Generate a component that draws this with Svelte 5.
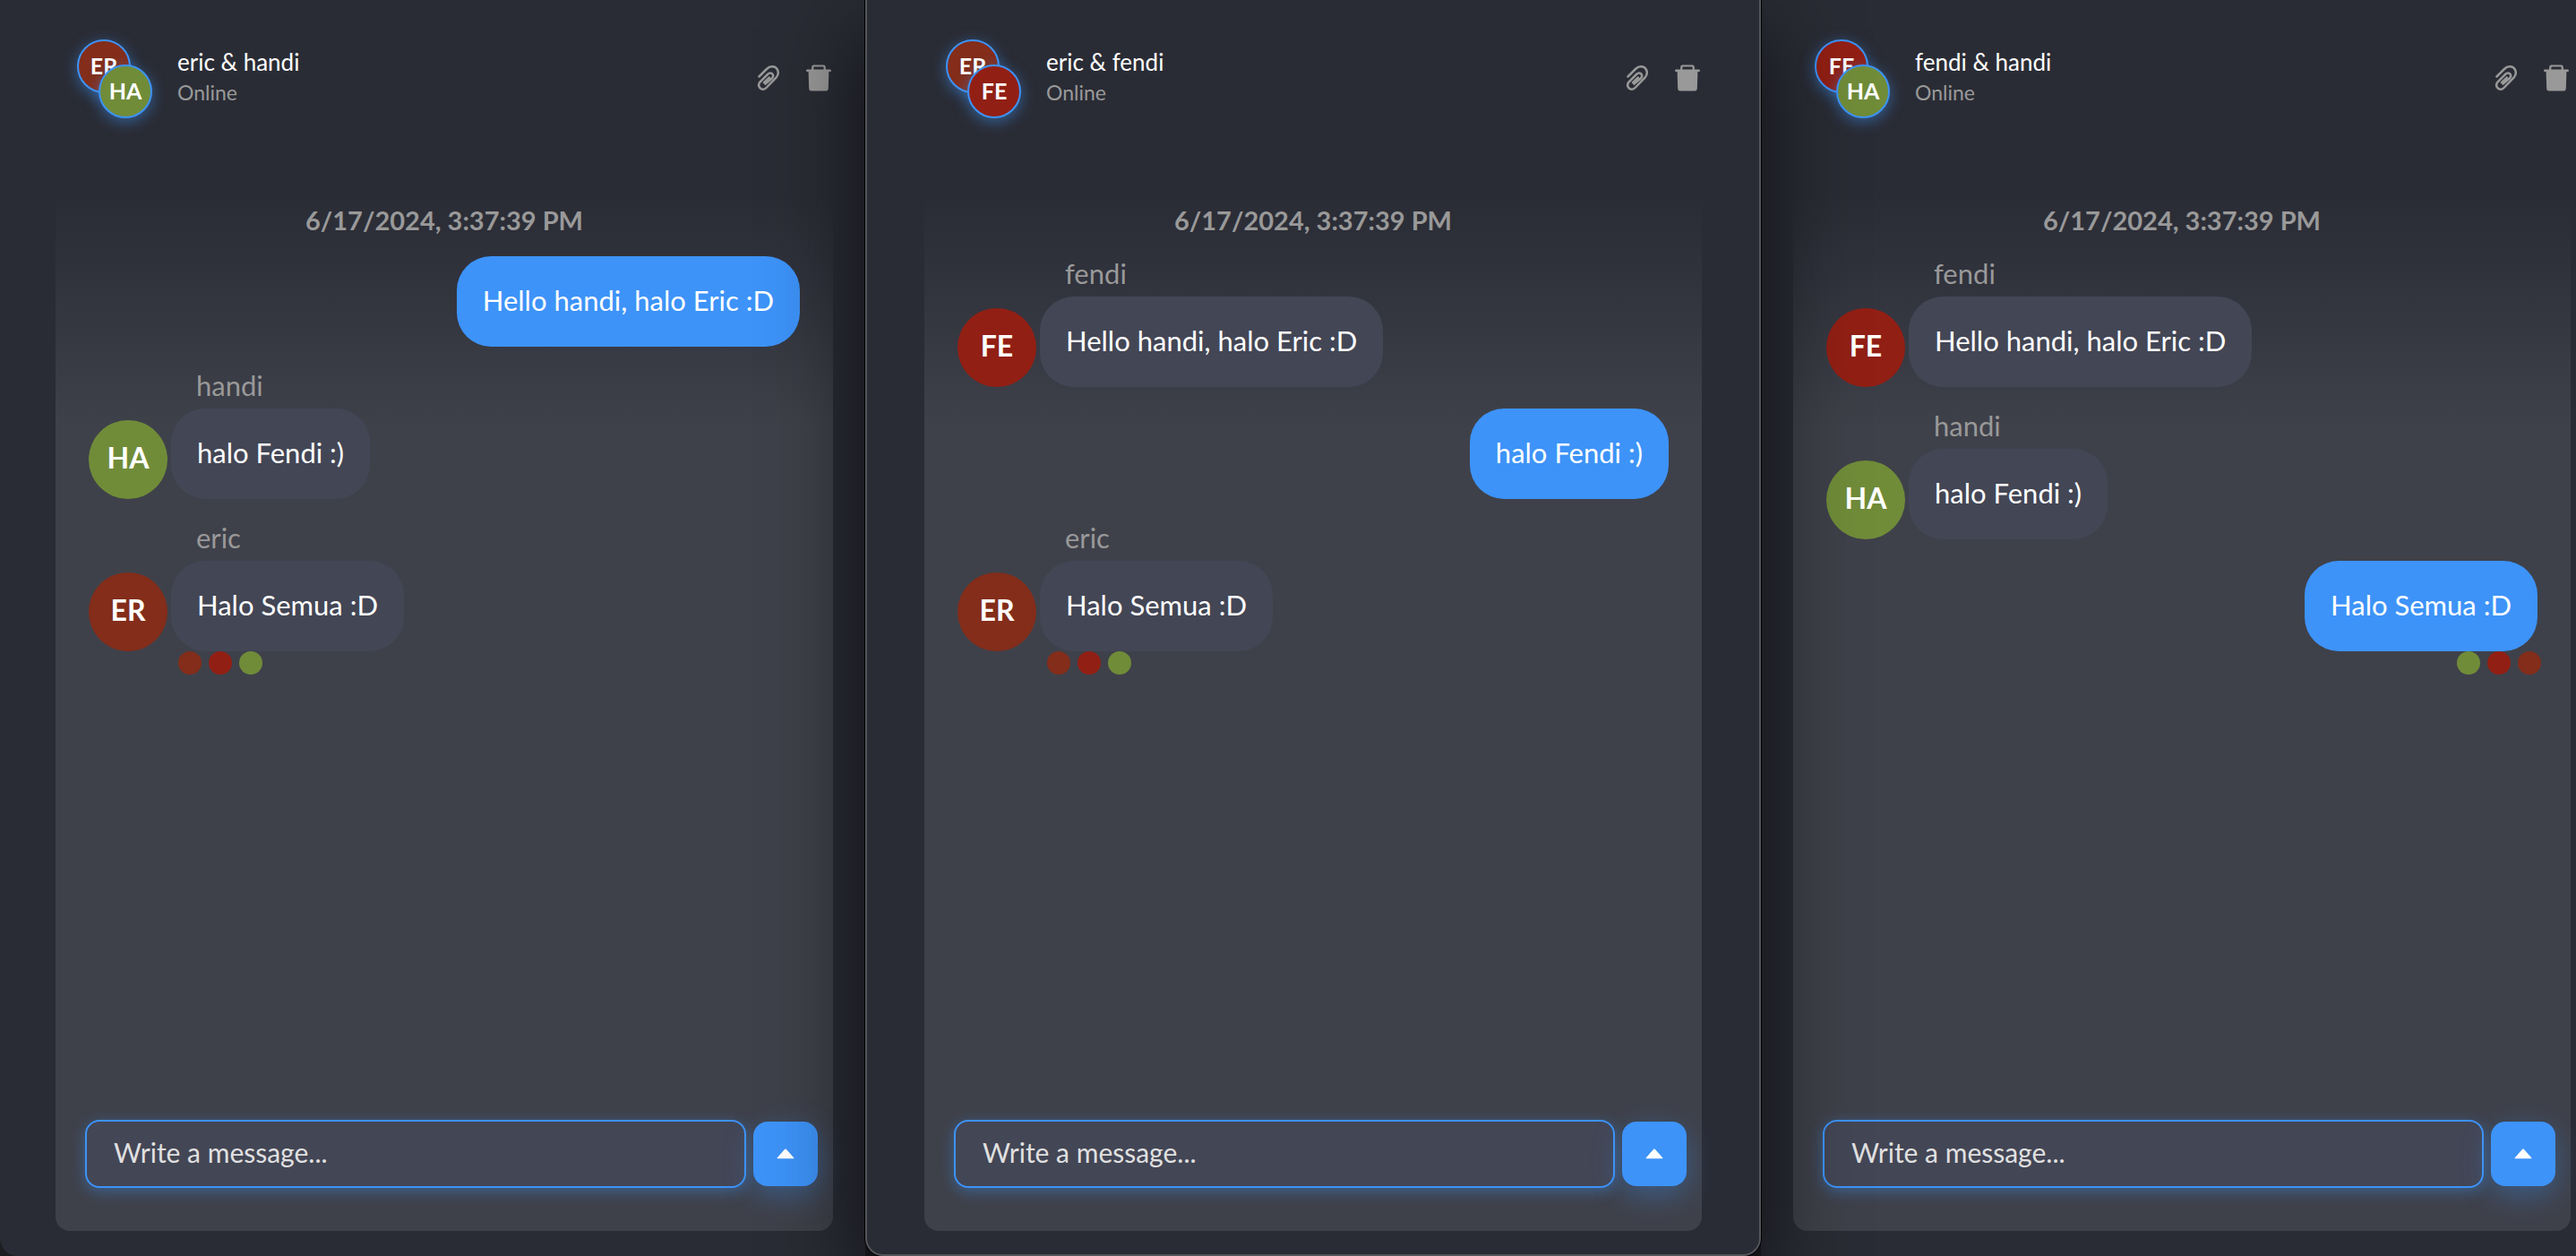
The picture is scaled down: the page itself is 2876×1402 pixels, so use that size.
<script>
  const people = {
    eric: { initials: 'ER', tone: 'rust' },
    fendi: { initials: 'FE', tone: 'red' },
    handi: { initials: 'HA', tone: 'green' }
  };
  const sent = [
    { from: 'fendi', text: 'Hello handi, halo Eric :D' },
    { from: 'handi', text: 'halo Fendi :)' },
    { from: 'eric', text: 'Halo Semua :D' }
  ];
  const windows = [
    { me: 'fendi', others: ['eric', 'handi'], place: 'left' },
    { me: 'handi', others: ['eric', 'fendi'], place: 'front' },
    { me: 'eric', others: ['fendi', 'handi'], place: 'right' }
  ];
  const readers = ['eric', 'fendi', 'handi'];
</script>

<main class="desk">
  {#each windows as win}
    <section class="window {win.place}" aria-label={win.others.join(' & ')}>
      <header>
        <div class="pair">
          {#each win.others as name}
            <span class="small {people[name].tone}">{people[name].initials}</span>
          {/each}
        </div>
        <div class="title">
          <h1>{win.others.join(' & ')}</h1>
          <p>Online</p>
        </div>
        <div class="tools">
          <button aria-label="Attach a file">
            <svg width="28" height="32" viewBox="0 0 28 32" fill="none" stroke="currentColor" stroke-width="2.5" stroke-linecap="round">
              <path d="M3.500 14.500 L12 6 C14 4 15.800 3.200 18 3.200 C24 3.200 27.200 10.500 22.500 15.600 L11.500 27 C7 31.500 .5 26 4.500 20.600 L13 12 C16.500 8.500 21.200 12.200 18 16.300 L10.500 22.600 M9 21.200 L14.800 15.600" />
            </svg>
          </button>
          <button aria-label="Delete chat">
            <svg width="28" height="32" viewBox="0 0 28 32" fill="currentColor">
              <path fill-rule="evenodd" d="M6 6.500 L6.300 3 Q6.700 1.500 8.300 1.500 H19.700 Q21.300 1.500 21.700 3 L22 6.500 H27 Q28 6.500 28 8 Q28 9 27 9 H25.400 L24.800 28 Q24.700 30.500 22.200 30.500 H5.800 Q3.300 30.500 3.200 28 L2.600 9 H1 Q0 9 0 8 Q0 6.500 1 6.500 Z M8.600 3.600 L8.300 6.500 H19.700 L19.400 3.600 Z" />
            </svg>
          </button>
        </div>
      </header>

      <div class="chat">
        <div class="feed">
          <time>6/17/2024, 3:37:39 PM</time>
          {#each sent as message, i}
            {@const mine = message.from === win.me}
            <article class:mine>
              {#if !mine}
                <span class="avatar {people[message.from].tone}">{people[message.from].initials}</span>
              {/if}
              <div class="body">
                {#if !mine}<span class="author">{message.from}</span>{/if}
                <p class="bubble">{message.text}</p>
              </div>
            </article>
            {#if i === sent.length - 1}
              <div class="reads" class:mine>
                {#each readers as reader}
                  <span class="dot {people[reader].tone}" title={reader}></span>
                {/each}
              </div>
            {/if}
          {/each}
        </div>
        <form onsubmit={(e) => e.preventDefault()}>
          <input type="text" placeholder="Write a message..." aria-label="Message" />
          <button class="send" aria-label="Send">
            <svg width="20" height="12" viewBox="0 0 20 12" fill="#fff"><path d="M9.200 .8 Q10 0 10.800 .8 L19.400 10.400 Q19.600 11.200 18.800 11.200 H1.200 Q.4 11.200 .6 10.400 Z" /></svg>
          </button>
        </form>
      </div>
    </section>
  {/each}
</main>

<style>
  :global(body) {
    margin: 0;
    background: #1d1d22;
  }
  .desk {
    display: grid;
    grid-template-columns: 966fr 1000fr 910fr;
    min-height: 100vh;
    font-family: Lato, 'Open Sans', sans-serif;
    color: #fff;
    overflow: hidden;
  }
  .desk * {
    box-sizing: border-box;
  }
  .window {
    display: flex;
    flex-direction: column;
    background: #2a2c35;
    padding: 0 36px 28px 62px;
  }
  .left {
    border-bottom-left-radius: 20px;
  }
  .front {
    position: relative;
    padding: 0 64px 26px;
    border: 2px solid #55565c;
    border-top: 0;
    border-radius: 0 0 20px 20px;
    box-shadow: 0 0 0 1px #000, 0 36px 100px 6px rgba(0, 0, 0, 0.6);
  }
  .right {
    padding: 0 6px 28px 36px;
  }
  header {
    display: flex;
    align-items: center;
    height: 216px;
    padding: 44px 0 84px 24px;
  }
  .pair {
    display: grid;
    grid-template-columns: 24px 60px;
    grid-template-rows: 28px 60px;
  }
  .small {
    width: 60px;
    height: 60px;
    border: 2px solid #3d93f8;
    border-radius: 50%;
    box-shadow: 0 4px 16px rgba(61, 147, 248, 0.5);
    font-size: 25px;
    font-weight: 700;
    line-height: 54px;
    text-align: center;
  }
  .small:last-child {
    grid-area: 2 / 2;
  }
  .rust { background: #832d1a; }
  .red { background: #921f14; }
  .green { background: #708c39; }
  .title {
    margin-left: 28px;
    padding-bottom: 6px;
    flex: 1;
  }
  h1, p {
    margin: 0;
    font-weight: 400;
  }
  h1 {
    font-size: 26px;
    line-height: 36px;
  }
  .title p {
    font-size: 23px;
    line-height: 32px;
    color: #999;
  }
  .tools {
    display: flex;
    gap: 28px;
    padding: 0 2px 2px 0;
  }
  button {
    display: grid;
    place-items: center;
    padding: 0;
    border: 0;
    background: none;
    color: #999;
    cursor: pointer;
  }
  .chat {
    flex: 1;
    display: flex;
    flex-direction: column;
    border-radius: 16px;
    background: linear-gradient(#2a2c35, #2f313b 80px, #3f414a 260px);
  }
  .feed {
    flex: 1;
    display: flex;
    flex-direction: column;
    padding: 10px 37px 0;
  }
  time {
    padding: 2px 0 22px;
    color: #999;
    font-size: 29px;
    font-weight: 700;
    line-height: 36px;
    text-align: center;
  }
  article {
    display: flex;
    align-items: flex-end;
    gap: 4px;
  }
  article + article {
    margin-top: 24px;
  }
  article.mine {
    justify-content: flex-end;
  }
  .avatar {
    width: 88px;
    height: 88px;
    border-radius: 50%;
    font-size: 32px;
    font-weight: 700;
    line-height: 84px;
    text-align: center;
  }
  .author {
    display: block;
    padding: 0 0 7px 28px;
    color: #999;
    font-size: 31px;
    line-height: 38px;
  }
  .bubble {
    padding: 29px 29px 31px;
    border-radius: 38px;
    background: #434655;
    font-size: 31px;
    line-height: 41px;
  }
  .mine .bubble {
    background: #3d93f8;
  }
  .reads {
    display: flex;
    gap: 8px;
    padding-left: 100px;
  }
  .reads.mine {
    flex-direction: row-reverse;
    padding: 0;
    margin-right: -4px;
  }
  .dot {
    width: 26px;
    height: 26px;
    border-radius: 50%;
  }
  form {
    display: flex;
    align-items: center;
    gap: 8px;
    padding: 0 17px 48px 33px;
  }
  input {
    flex: 1;
    min-width: 0;
    height: 76px;
    padding: 0 30px 4px;
    border: 2px solid #3d93f8;
    border-radius: 16px;
    background: #434655;
    box-shadow: 0 4px 16px rgba(61, 147, 248, 0.4);
    color: #fff;
    font: 30px Lato, 'Open Sans', sans-serif;
    outline: 0;
  }
  input::placeholder {
    color: #e0e0e0;
    opacity: 1;
  }
  .send {
    width: 72px;
    height: 72px;
    border-radius: 16px;
    background: #3d93f8;
    box-shadow: 0 10px 32px rgba(61, 147, 248, 0.35);
  }
</style>
